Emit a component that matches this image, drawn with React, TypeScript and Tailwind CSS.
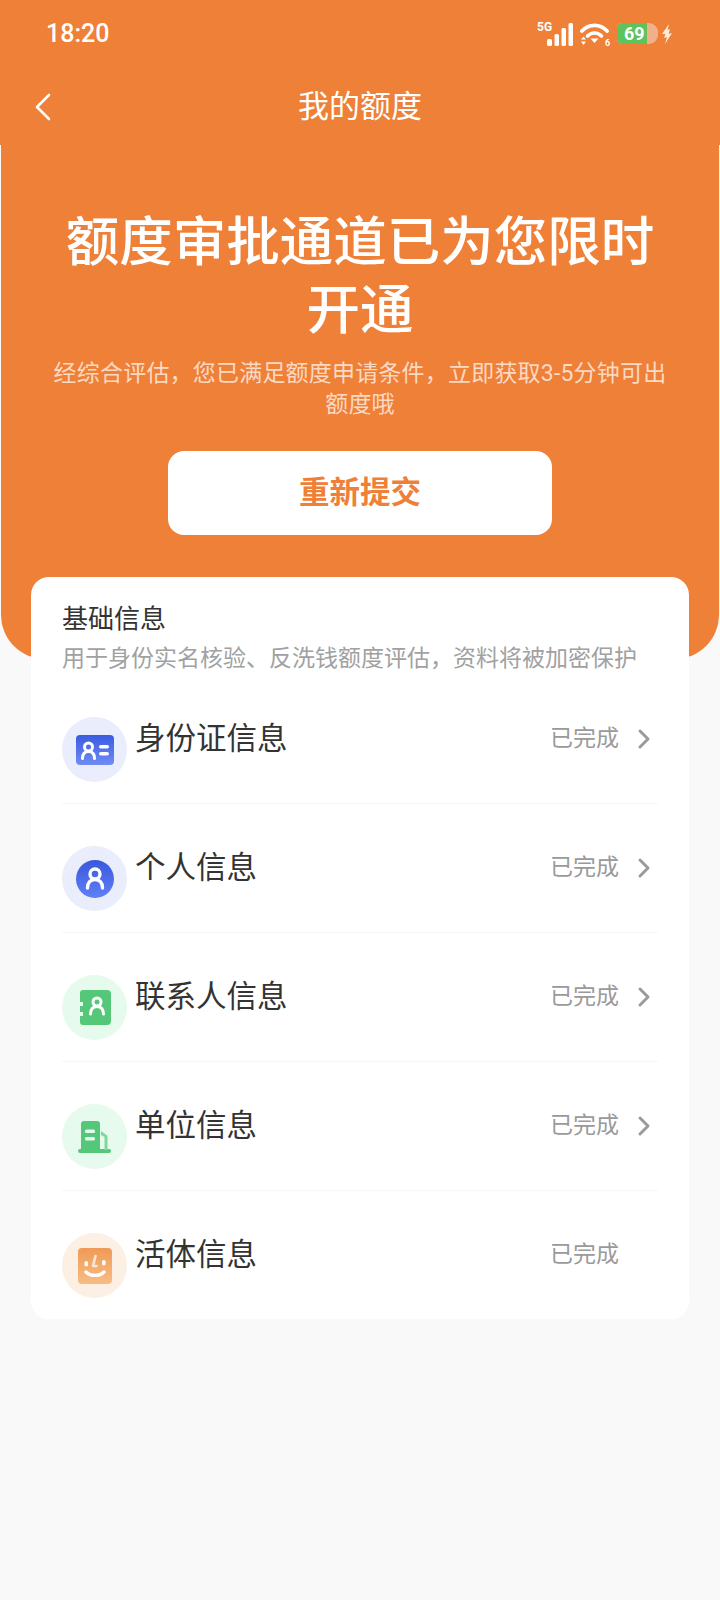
import React from 'react';

const FONT = "font-['Roboto','Noto_Sans_CJK_SC',sans-serif]";

function SignalIcon() {
  return (
    <svg width="37" height="26" viewBox="0 0 37 26" fill="none">
      <text x="0" y="10" fill="#fff" fontSize="12" fontWeight="700" fontFamily="Roboto, sans-serif">5G</text>
      <rect x="10" y="18" width="5" height="7" rx="1.500" fill="#fff" />
      <rect x="17.500" y="13" width="4.500" height="12" rx="1.500" fill="#fff" />
      <rect x="24.500" y="7" width="4.500" height="18" rx="1.500" fill="#fff" />
      <rect x="31.500" y="2" width="4.500" height="23" rx="1.500" fill="#fff" />
    </svg>
  );
}

function WifiIcon() {
  return (
    <svg width="31" height="24" viewBox="0 0 31 24" fill="none">
      <path d="M2 9C9 1.500 20 1.500 27 9" stroke="#fff" strokeWidth="3.800" strokeLinecap="round" />
      <path d="M7.500 14C11.500 10 17.500 10 21.500 14" stroke="#fff" strokeWidth="3.600" strokeLinecap="round" />
      <path d="M10.500 16.500h8l-4 4.500z" fill="#fff" />
      <path d="M3.500 14.500l2.500 3H1zM3.500 23l2.500-3.500H1z" fill="#fff" />
      <text x="25" y="23.500" fill="#fff" fontSize="9" fontWeight="700" fontFamily="Roboto, sans-serif">6</text>
    </svg>
  );
}

function BatteryIcon() {
  return (
    <div className="relative flex h-[21px] w-[41px] overflow-hidden rounded-l-[5px] rounded-r-[9px] bg-[#f2b08a]">
      <div className="w-[30px] rounded-l-[5px] bg-[#5cc45a]" />
      <span className="absolute left-[7px] top-0 text-[18px] leading-[21px] font-bold text-white">69</span>
    </div>
  );
}

function BoltIcon() {
  return (
    <svg width="12" height="20" viewBox="0 0 12 20" className="-ml-[3px]">
      <path d="M8 0L1 10l3.500 0L3 14l3-1-2 7 7-11-3.500 1L9 5 6.500 6z" fill="#fff" fillOpacity="0.85" />
    </svg>
  );
}

function IdIcon() {
  return (
    <svg width="38" height="30" viewBox="0 0 38 30">
      <defs>
        <linearGradient id="idGrad" x1="0" y1="0" x2="0" y2="1">
          <stop offset="0" stopColor="#3b5be0" />
          <stop offset="1" stopColor="#6f8cf5" />
        </linearGradient>
      </defs>
      <rect width="38" height="30" rx="4" fill="url(#idGrad)" />
      <circle cx="12.500" cy="12" r="4" fill="none" stroke="#fff" strokeWidth="3" />
      <path d="M6.500 23.500c0-5 2.500-7 6-7s6 2 6 7" fill="none" stroke="#fff" strokeWidth="3" strokeLinecap="round" />
      <rect x="23" y="10" width="10" height="3.400" rx="1.700" fill="#fff" />
      <rect x="23" y="17" width="10" height="3.400" rx="1.700" fill="#fff" />
    </svg>
  );
}

function PersonIcon() {
  return (
    <svg width="38" height="38" viewBox="0 0 38 38">
      <defs>
        <linearGradient id="personGrad" x1="0" y1="0" x2="0" y2="1">
          <stop offset="0" stopColor="#3a58dc" />
          <stop offset="1" stopColor="#5f80f6" />
        </linearGradient>
      </defs>
      <circle cx="19" cy="19" r="19" fill="url(#personGrad)" />
      <circle cx="19" cy="14" r="5" fill="none" stroke="#fff" strokeWidth="3.400" />
      <path d="M11.500 28c0-5.500 3-8.500 7.500-8.500s7.500 3 7.500 8.500" fill="none" stroke="#fff" strokeWidth="3.400" strokeLinecap="round" />
    </svg>
  );
}

function ContactIcon() {
  return (
    <svg width="32" height="35" viewBox="0 0 32 35">
      <path d="M4 0h24a4 4 0 0 1 4 4v27a4 4 0 0 1-4 4H4a3 3 0 0 1-3-3v-6h3v-4H1v-6h3v-4H1V3a3 3 0 0 1 3-3z" fill="#54c878" />
      <circle cx="18" cy="12" r="4" fill="none" stroke="#fff" strokeWidth="3" />
      <path d="M11.500 24c0-5 2.800-7.500 6.500-7.500s6.500 2.500 6.500 7.500" fill="none" stroke="#fff" strokeWidth="3" strokeLinecap="round" />
    </svg>
  );
}

function BuildingIcon() {
  return (
    <svg width="33" height="32" viewBox="0 0 33 32">
      <path d="M3 3a3 3 0 0 1 3-3h13a3 3 0 0 1 3 3v27H3z" fill="#54c878" />
      <rect x="0" y="28" width="33" height="4" rx="2" fill="#54c878" />
      <rect x="7" y="8.500" width="10" height="3.400" rx="1.500" fill="#e8fbf0" />
      <rect x="7" y="16" width="10" height="3.400" rx="1.500" fill="#e8fbf0" />
      <path d="M23 10l5.500 4a2 2 0 0 1 1 2v13h-3V16l-3.500-2z" fill="#7fd79b" />
    </svg>
  );
}

function FaceIcon() {
  return (
    <svg width="34" height="36" viewBox="0 0 34 36">
      <defs>
        <linearGradient id="faceGrad" x1="0" y1="0" x2="0" y2="1">
          <stop offset="0" stopColor="#f09a56" />
          <stop offset="1" stopColor="#f7bd85" />
        </linearGradient>
      </defs>
      <rect width="34" height="36" rx="4" fill="url(#faceGrad)" />
      <rect x="6.500" y="13" width="3.600" height="5.500" rx="1.800" fill="#fff" />
      <rect x="24" y="12" width="3.600" height="5.500" rx="1.800" fill="#fff" />
      <path d="M17.500 8l-2.500 10h3.500" fill="none" stroke="#fde4d4" strokeWidth="2.600" strokeLinecap="round" strokeLinejoin="round" />
      <path d="M8 24c4.500 4.500 13.500 4.500 18 0" fill="none" stroke="#fff" strokeWidth="3.400" strokeLinecap="round" />
    </svg>
  );
}

const rows = [
  { name: '身份证信息', tint: 'bg-[#e9edfc]', icon: <IdIcon />, arrow: true },
  { name: '个人信息', tint: 'bg-[#e9edfc]', icon: <PersonIcon />, arrow: true },
  { name: '联系人信息', tint: 'bg-[#e6fbee]', icon: <ContactIcon />, arrow: true },
  { name: '单位信息', tint: 'bg-[#e6fbee]', icon: <BuildingIcon />, arrow: true },
  { name: '活体信息', tint: 'bg-[#fcefe3]', icon: <FaceIcon />, arrow: false },
];

export default function App() {
  return (
    <div className={`min-h-[1600px] bg-[#f9f9f9] ${FONT}`}>
      <header className="bg-[#ef8037] text-white">
        <div className="flex h-[66px] items-center justify-between pt-[1px] pl-[46px] pr-[47px]">
          <span className="text-[25px] font-medium">18:20</span>
          <div className="flex items-center gap-[6px]">
            <SignalIcon />
            <WifiIcon />
            <BatteryIcon />
            <BoltIcon />
          </div>
        </div>
        <div className="relative flex h-[79px] items-center justify-center pt-[4px]">
          <svg width="18" height="28" viewBox="0 0 18 28" fill="none" className="absolute left-[34px] top-[27px]">
            <path d="M15 2L3 14l12 12" stroke="#fff" strokeWidth="2.600" strokeLinecap="round" strokeLinejoin="round" />
          </svg>
          <h1 className="text-[31px]">我的额度</h1>
        </div>
      </header>

      <section className="mx-[1px] flex h-[514px] flex-col items-center rounded-b-[44px] bg-[#ef8037] px-[50px] pt-[64px] text-center text-white">
        <h2 className="text-[53.500px] leading-[68px] font-medium">额度审批通道已为您限时开通</h2>
        <p className="mt-[13px] text-[23px] leading-[31px] tracking-[0.2px] text-[#fbd9c3]">经综合评估，您已满足额度申请条件，立即获取3-5分钟可出额度哦</p>
        <button className="mt-[31px] h-[84px] w-[384px] shrink-0 rounded-[16px] bg-white text-[30.500px] font-bold text-[#ef8037]">重新提交</button>
      </section>

      <main className="relative mx-[31px] -mt-[82px] h-[742px] rounded-[18px] bg-white px-[31px] pt-[24px]">
        <h3 className="text-[26px] leading-[36px] text-[#333333]">基础信息</h3>
        <p className="mt-[6px] whitespace-nowrap text-[23px] leading-[32px] text-[#a1a1a1]">用于身份实名核验、反洗钱额度评估，资料将被加密保护</p>
        <ul className="mt-[42px] flex flex-col gap-[42px]">
          {rows.map((row, i) => (
            <li key={row.name} className={`flex h-[87px] items-start ${i < rows.length - 1 ? 'border-b border-[#f6f6f6]' : ''}`}>
              <div className={`flex h-[65px] w-[65px] shrink-0 items-center justify-center rounded-full ${row.tint}`}>{row.icon}</div>
              <span className="ml-[8px] text-[30.500px] leading-[44px] text-[#333333]">{row.name}</span>
              <span className="ml-auto text-[23px] leading-[44px] text-[#9a9a9a]">已完成</span>
              <div className="flex h-[44px] w-[39px] items-center pl-[18px]">
                {row.arrow && (
                  <svg width="14" height="22" viewBox="0 0 14 22" fill="none">
                    <path d="M3 3l8 8-8 8" stroke="#9a9a9a" strokeWidth="3" strokeLinecap="round" strokeLinejoin="round" />
                  </svg>
                )}
              </div>
            </li>
          ))}
        </ul>
      </main>
    </div>
  );
}
